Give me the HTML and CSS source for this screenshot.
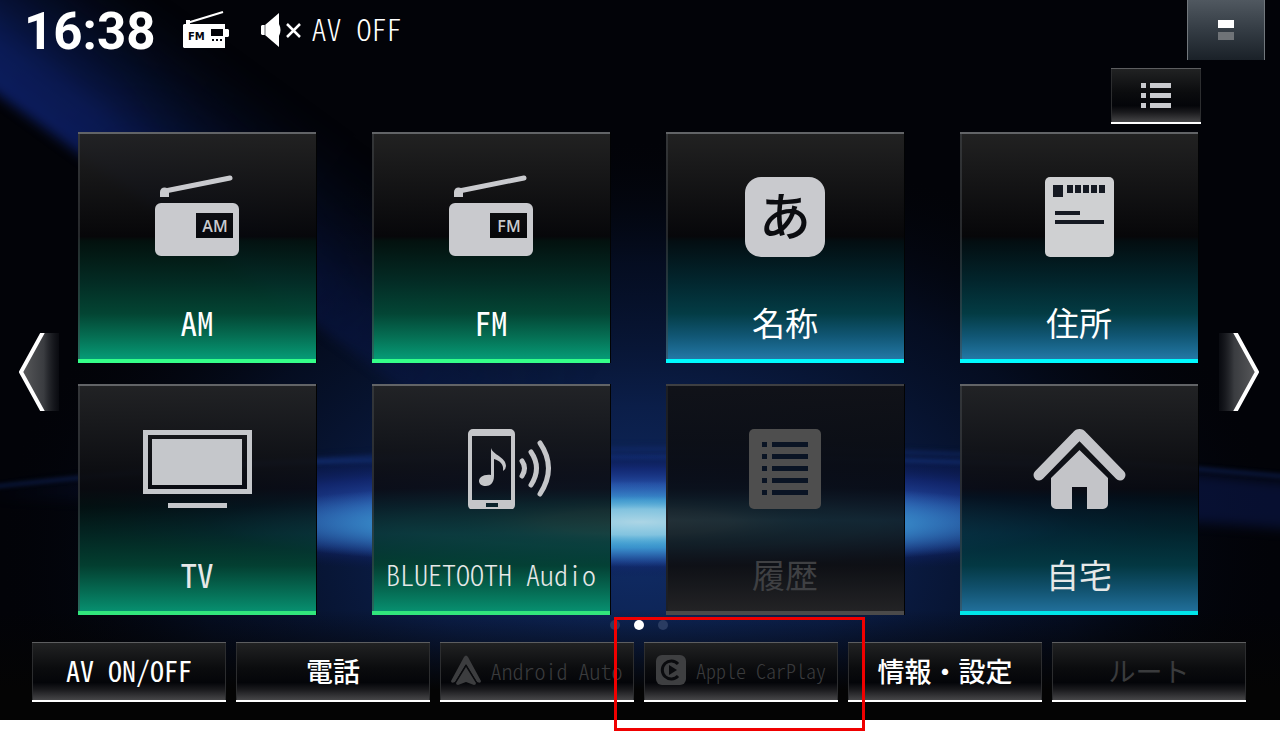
FILE: index.html
```html
<!DOCTYPE html>
<html lang="ja">
<head>
<meta charset="utf-8">
<meta name="viewport" content="width=device-width, initial-scale=1">
<title>AV OFF</title>
<link rel="stylesheet" href="styles.css">
</head>
<body>
<main class="screen">
  <svg class="backdrop" viewBox="0 0 1280 720" preserveAspectRatio="none" aria-hidden="true">
    <defs>
      <radialGradient id="navy"><stop offset="0" stop-color="#102c66"/><stop offset=".35" stop-color="#0c2150" stop-opacity=".9"/><stop offset=".7" stop-color="#071535" stop-opacity=".55"/><stop offset="1" stop-color="#03050c" stop-opacity="0"/></radialGradient>
      <radialGradient id="band"><stop offset="0" stop-color="#3a6ac8"/><stop offset=".5" stop-color="#2650a8" stop-opacity=".9"/><stop offset=".75" stop-color="#172f86" stop-opacity=".55"/><stop offset="1" stop-color="#0a1750" stop-opacity="0"/></radialGradient>
      <radialGradient id="cyan"><stop offset="0" stop-color="#43b4dc"/><stop offset=".55" stop-color="#3a92cc"/><stop offset="1" stop-color="#2f6fbd" stop-opacity="0"/></radialGradient>
      <radialGradient id="core"><stop offset="0" stop-color="#acd5e5"/><stop offset=".5" stop-color="#93cbe2" stop-opacity=".8"/><stop offset="1" stop-color="#4aa8d4" stop-opacity="0"/></radialGradient>
      <linearGradient id="ray" x1="0" y1="1" x2="0" y2="0"><stop offset="0" stop-color="#0d1f66"/><stop offset=".25" stop-color="#0b1c5a"/><stop offset=".6" stop-color="#061236" stop-opacity=".7"/><stop offset="1" stop-color="#030a20" stop-opacity="0"/></linearGradient>
      <linearGradient id="raylen"><stop offset="0" stop-color="#fff"/><stop offset=".3" stop-color="#ddd"/><stop offset=".6" stop-color="#777"/><stop offset="1" stop-color="#000"/></linearGradient>
      <linearGradient id="sea"><stop offset="0" stop-color="#0d2060" stop-opacity="0"/><stop offset=".25" stop-color="#0d2060"/><stop offset="1" stop-color="#0d1c58"/></linearGradient>
      <linearGradient id="floor" x1="0" y1="0" x2="0" y2="1"><stop offset="0" stop-color="#040404" stop-opacity="0"/><stop offset="1" stop-color="#040404"/></linearGradient>
      <mask id="fade" maskUnits="userSpaceOnUse" x="-150" y="-220" width="800" height="280"><rect x="-150" y="-220" width="800" height="280" fill="url(#raylen)"/></mask>
      <filter id="soft" x="-20%" y="-20%" width="140%" height="140%" color-interpolation-filters="sRGB"><feGaussianBlur stdDeviation="6"/></filter>
      <filter id="thin" x="-5%" y="-50%" width="110%" height="200%" color-interpolation-filters="sRGB"><feGaussianBlur stdDeviation="2"/></filter>
    </defs>
    <rect width="1280" height="720" fill="#020308"/>
    <ellipse cx="640" cy="550" rx="640" ry="410" fill="url(#navy)"/>
    <g transform="translate(0 96) rotate(36)" mask="url(#fade)">
      <rect x="-120" y="-170" width="770" height="170" fill="url(#ray)" filter="url(#soft)"/>
    </g>
    <path d="M-20 490Q300 454 640 452T1300 484V530Q900 500 640 500T-20 500Z" fill="url(#sea)" opacity=".5" filter="url(#soft)"/>
    <path d="M-20 488Q300 452 640 449T1300 478" fill="none" stroke="#153078" stroke-width="3" opacity=".6" filter="url(#thin)"/>
    <path d="M200 466Q640 448 1080 466" fill="none" stroke="#1c429a" stroke-width="2" opacity=".8" filter="url(#thin)"/>
    <ellipse cx="640" cy="515" rx="560" ry="62" fill="url(#band)"/>
    <ellipse cx="640" cy="524" rx="430" ry="43" fill="url(#cyan)"/>
    <ellipse cx="640" cy="522" rx="190" ry="26" fill="url(#core)"/>
    <rect y="610" width="1280" height="80" fill="url(#floor)"/>
    <rect y="690" width="1280" height="30" fill="#040404"/>
  </svg>

  <header class="status">
    <time class="clock" datetime="16:38">16:38</time>
    <svg class="status-radio" width="46" height="38" viewBox="0 0 46 38" fill="#fff" role="img" aria-label="FM ラジオ">
      <path d="M4 12 40 1" stroke="#fff" stroke-width="2"/><path d="M3 9h4v5H3zM42 18h3l1 1v6l-1 1h-3z"/>
      <path fill-rule="evenodd" d="M1 13h41v24H1l-1-1V14zM28 18v7h12v-7z"/>
      <text class="mini-text" x="5" y="29">FM</text>
      <path d="M29 28h2v2h-2zM33 28h2v2h-2zM37 28h2v2h-2z" fill="#05070f"/>
    </svg>
    <div class="source">
      <svg width="40" height="34" viewBox="0 0 40 34" aria-hidden="true"><path d="M0 13l1-1h3L18 0v11q3 6 0 12v11L4 22H1l-1-1z" fill="#fff"/><path d="M4 12v10" stroke="#05070f" stroke-opacity=".6"/><path d="M26 11l13 13M39 11 26 24" stroke="#fff" stroke-width="2.5"/></svg>
      <span class="source-name">AV OFF</span>
    </div>
    <button class="split" type="button" aria-label="画面切替"><span class="split-on"></span><span class="split-off"></span></button>
  </header>

  <div class="tools">
    <button class="list-button" type="button" aria-label="リスト">
      <svg width="31" height="27" viewBox="0 0 31 27" fill="#c9cace"><path d="M0 1h5v5H0zM9 1h21v5H9zM0 11h5v5H0zM9 11h21v5H9zM0 21h5v5H0zM9 21h21v5H9z"/></svg>
    </button>
  </div>

  <div class="pager">
    <button class="arrow" type="button" aria-label="前へ">
      <svg width="40" height="78" viewBox="0 0 40 78"><defs><linearGradient id="al"><stop offset="0" stop-color="#595a5c"/><stop offset=".6" stop-color="#3a3c40"/><stop offset="1" stop-color="#15171d" stop-opacity=".4"/></linearGradient></defs><path d="M24 0h16v78H24L2 39z" fill="url(#al)"/><path d="M24-1 2 39l22 40" fill="none" stroke="#fff" stroke-width="4"/></svg>
    </button>
    <div class="grid">
      <button class="tile av" type="button">
        <svg class="icon" width="84" height="82" viewBox="0 0 84 82" aria-hidden="true"><path d="M10 16 75 3" stroke="#c9cace" stroke-width="5" stroke-linecap="round"/><path d="M5 22v-5a4 4 0 0 1 9 0v5z" fill="#c9cace"/><path fill-rule="evenodd" d="M6 28h72a6 6 0 0 1 6 6v41a6 6 0 0 1-6 6H6a6 6 0 0 1-6-6V34a6 6 0 0 1 6-6zM41 38v25h37V38z" fill="#c9cace"/><text class="band-text" x="60" y="57">AM</text></svg>
        <span class="label">AM</span>
      </button>
      <button class="tile av" type="button">
        <svg class="icon" width="84" height="82" viewBox="0 0 84 82" aria-hidden="true"><path d="M10 16 75 3" stroke="#c9cace" stroke-width="5" stroke-linecap="round"/><path d="M5 22v-5a4 4 0 0 1 9 0v5z" fill="#c9cace"/><path fill-rule="evenodd" d="M6 28h72a6 6 0 0 1 6 6v41a6 6 0 0 1-6 6H6a6 6 0 0 1-6-6V34a6 6 0 0 1 6-6zM41 38v25h37V38z" fill="#c9cace"/><text class="band-text" x="60" y="57">FM</text></svg>
        <span class="label">FM</span>
      </button>
      <button class="tile navi" type="button">
        <svg class="icon" width="80" height="82" viewBox="0 0 80 82" aria-hidden="true"><rect y="2" width="80" height="80" rx="16" fill="#c9cace"/><text class="kana-text" x="40" y="61">あ</text></svg>
        <span class="label">名称</span>
      </button>
      <button class="tile navi" type="button">
        <svg class="icon" width="69" height="82" viewBox="0 0 69 82" aria-hidden="true"><rect y="2" width="69" height="80" rx="5" fill="#cfd0d2"/><path d="M8 10h10v12H8zM22 10h6v8h-6zM30 10h6v8h-6zM38 10h6v8h-6zM46 10h6v8h-6zM54 10h6v8h-6zM10 36h25v4H10zM10 45h49v4H10z" fill="#151922"/></svg>
        <span class="label">住所</span>
      </button>
      <button class="tile av low" type="button">
        <svg class="icon" width="109" height="82" viewBox="0 0 109 82" fill="#c5c7cb" aria-hidden="true"><path fill-rule="evenodd" d="M0 3h109v64H0zM5 8v54h99V8z"/><path d="M9 12h90v46H9zM25 76h59v5H25z"/></svg>
        <span class="label">TV</span>
      </button>
      <button class="tile av low" type="button">
        <svg class="icon" width="122" height="82" viewBox="0 0 122 82" fill="#c5c6c9" aria-hidden="true"><path fill-rule="evenodd" d="M43 2h37a5 5 0 0 1 5 5v71a5 5 0 0 1-5 5H43a5 5 0 0 1-5-5V7a5 5 0 0 1 5-5zM42 9v64h39V9zM56 76v4h12v-4z"/><path d="M61 21c2 7 15 9 15 18q0 3-3 5c1-7-3-10-9-12v17c0 7-4 10-8 10s-7-2-7-5 4-7 12-6z"/><path d="M92 34q5 7 0 15M101 25q11 16 0 33M110 16q17 25 0 51" fill="none" stroke="#c5c6c9" stroke-width="5" stroke-linecap="round"/></svg>
        <span class="label long">BLUETOOTH Audio</span>
      </button>
      <button class="tile off" type="button" disabled>
        <svg class="icon" width="72" height="82" viewBox="0 0 72 82" aria-hidden="true"><rect y="2" width="72" height="80" rx="5" fill="#4e4e4e"/><path d="M13 15h5v5h-5zM23 15h36v5H23zM13 27h5v5h-5zM23 27h36v5H23zM13 39h5v5h-5zM23 39h36v5H23zM13 51h5v5h-5zM23 51h36v5H23zM13 63h5v5h-5zM23 63h36v5H23z" fill="#0a1424"/></svg>
        <span class="label">履歴</span>
      </button>
      <button class="tile navi low" type="button">
        <svg class="icon" width="93" height="82" viewBox="0 0 93 82" fill="#c3c4c8" aria-hidden="true"><path d="M6 48 44 9Q46.500 6 49 9L87 48" fill="none" stroke="#c3c4c8" stroke-width="11" stroke-linecap="round" stroke-linejoin="round"/><path d="M46.500 23 75 51v26a5 5 0 0 1-5 5H54V60H39v22H23a5 5 0 0 1-5-5V51z"/></svg>
        <span class="label">自宅</span>
      </button>
    </div>
    <button class="arrow" type="button" aria-label="次へ">
      <svg width="40" height="78" viewBox="0 0 40 78"><defs><linearGradient id="ar"><stop offset="0" stop-color="#15171d" stop-opacity=".4"/><stop offset=".4" stop-color="#3a3c40"/><stop offset="1" stop-color="#595a5c"/></linearGradient></defs><path d="M16 0H0v78h16l22-39z" fill="url(#ar)"/><path d="M16-1 38 39 16 79" fill="none" stroke="#fff" stroke-width="4"/></svg>
    </button>
  </div>

  <div class="dots" role="img" aria-label="2 / 3"><span class="dot"></span><span class="dot current"></span><span class="dot"></span></div>

  <nav class="bar">
    <button class="key latin" type="button">AV ON/OFF</button>
    <button class="key" type="button">電話</button>
    <button class="key android" type="button" disabled>
      <svg width="30" height="30" viewBox="0 0 30 30" fill="#3c3d3f" aria-hidden="true"><path d="M13 2q2-3 4 0l13 24q0 3-4 1L15 9 4 27q-4 2-4-1z"/><path d="M15 12l10 16q0 2-2 2l-8-3-8 3q-2 0-2-2z"/><path d="M15 10 4 28M15 10l11 18" stroke="#0a0b0e" stroke-width="1"/></svg>
      <span>Android Auto</span>
    </button>
    <div class="marked">
      <button class="key carplay" type="button" disabled>
        <svg width="30" height="30" viewBox="0 0 30 30" aria-hidden="true"><rect width="30" height="30" rx="6" fill="#3e3f41"/><path d="M22 9a9 9 0 1 0 0 12" fill="none" stroke="#0a0b0e" stroke-width="3"/><path d="M13 10l8 5-8 5z" fill="#0a0b0e"/></svg>
        <span>Apple CarPlay</span>
      </button>
      <span class="marker"></span>
    </div>
    <button class="key" type="button">情報・設定</button>
    <button class="key" type="button" disabled>ルート</button>
  </nav>
</main>
</body>
</html>
```
FILE: styles.css
```css
* { box-sizing: border-box; }

body {
  margin: 0;
  padding-bottom: 15px;
  background: #fff;
  font-family: "Noto Sans CJK JP", "Noto Sans", sans-serif;
  font-feature-settings: "hwid";
  color: #fff;
}

button {
  margin: 0;
  padding: 0;
  border: 0;
  background: none;
  font: inherit;
  font-feature-settings: inherit;
  color: inherit;
}

svg { display: block; flex: none; }

.screen {
  position: relative;
  isolation: isolate;
  display: flex;
  flex-direction: column;
  padding-bottom: 18px;
}

.backdrop {
  position: absolute;
  inset: 0;
  z-index: -1;
  width: 100%;
  height: 100%;
}

.status {
  display: flex;
  align-items: center;
  height: 60px;
  padding: 0 15px 0 24px;
}

.clock {
  font: 700 51px/60px Roboto, sans-serif;
  font-feature-settings: normal;
  padding-top: 4px;
}

.status-radio { margin-left: 28px; }

.source {
  display: flex;
  align-items: center;
  gap: 10px;
  margin-left: 32px;
}

.source-name {
  padding-bottom: 4px;
  font-size: 30px;
  line-height: 40px;
  font-weight: 300;
  white-space: pre;
}

.split {
  display: flex;
  flex-direction: column;
  align-items: center;
  gap: 4px;
  width: 78px;
  height: 60px;
  margin-left: auto;
  padding-top: 20px;
  border: solid #72787d;
  border-width: 0 1px;
  background: linear-gradient(#505860, #343c44 50%, #1a2128);
}

.split-on, .split-off { width: 16px; height: 8px; }
.split-on { background: #fff; }
.split-off { background: #6f7377; }

.tools {
  display: flex;
  justify-content: flex-end;
  padding: 8px 79px 8px 0;
}

.list-button, .key {
  border: 0 solid #fff;
  border-bottom-width: 2px;
  background: linear-gradient(#222324, #0b0c0e 45%, #040509 70%, #1a1a1d 82%, #464648);
  box-shadow: inset 0 1px #5d5e60, inset 1px 0 #2c2d2f, inset -1px 0 #2c2d2f;
}

.list-button {
  display: flex;
  align-items: center;
  justify-content: center;
  width: 90px;
  height: 56px;
}

.pager {
  display: flex;
  align-items: center;
  gap: 19px;
  padding: 0 21px 0 19px;
}

.arrow { flex: none; margin-bottom: 4px; }

.grid {
  flex: 1;
  display: grid;
  grid-template-columns: repeat(4, 1fr);
  gap: 21px 56px;
  padding-right: 2px;
}

.tile {
  display: flex;
  flex-direction: column;
  align-items: center;
  min-width: 0;
  padding: 43px 0 17px;
  border: 0 solid;
  border-bottom-width: 4px;
  box-shadow: inset 0 2px #626467, inset 2px 0 rgba(70, 74, 78, .5), 1px 0 #020304;
}

.av {
  border-bottom-color: #35ff89;
  background: linear-gradient(rgba(35, 35, 35, .96), rgba(7, 7, 9, .92) 46%, rgba(3, 18, 14, .92) 48%, rgba(3, 46, 37, .93) 66%, rgba(3, 72, 53, .95) 80%, rgba(5, 112, 84, .98) 90%, #069b76);
}

.navi {
  border-bottom-color: #00fbff;
  background: linear-gradient(rgba(35, 35, 35, .96), rgba(7, 7, 9, .92) 46%, rgba(3, 14, 17, .92) 48%, rgba(2, 40, 47, .93) 66%, rgba(3, 62, 70, .95) 80%, rgba(17, 88, 118, .98) 90%, #2378a6);
}

.av.low { border-bottom-color: #31e67c; color: #e6e8e8; background: linear-gradient(rgba(35, 36, 38, .96), rgba(9, 10, 14, .9) 46%, rgba(3, 18, 18, .86) 54%, rgba(3, 42, 37, .85) 66%, rgba(3, 66, 50, .94) 80%, rgba(5, 104, 80, .98) 90%, #078f6f); }
.navi.low { border-bottom-color: #00e5e9; color: #e6e8e8; background: linear-gradient(rgba(35, 36, 38, .96), rgba(9, 10, 14, .9) 46%, rgba(3, 14, 20, .88) 50%, rgba(2, 40, 50, .88) 66%, rgba(3, 58, 68, .95) 80%, rgba(17, 82, 110, .98) 90%, #216f9a); }

.off {
  border-bottom-color: #4b4a4a;
  color: #3f4043;
  background: linear-gradient(rgba(17, 18, 23, .95), rgba(8, 11, 17, .93) 46%, rgba(12, 20, 25, .85) 60%, rgba(14, 15, 18, .95) 80%, #232325);
  box-shadow: inset 0 2px #3e3f42, inset 2px 0 #1d1f24, 1px 0 #020304;
}

.label {
  margin-top: 45px;
  font-size: 33px;
  line-height: 40px;
  font-weight: 400;
  white-space: nowrap;
}

.label.long { font-size: 28px; font-weight: 300; }

.band-text {
  font: 600 16px "Open Sans", sans-serif;
  fill: #c9cace;
  text-anchor: middle;
}

.mini-text {
  font: 700 10px "DejaVu Sans", sans-serif;
  fill: #05070f;
}

.kana-text {
  font: 500 52px "Noto Sans CJK JP", sans-serif;
  fill: #0b0c10;
  text-anchor: middle;
}

.dots {
  display: flex;
  justify-content: center;
  gap: 14px;
  padding: 5px 2px 12px 0;
}

.dot {
  width: 10px;
  height: 10px;
  border-radius: 50%;
  background: #2a3c62;
}

.dot.current { background: #fff; }

.bar {
  display: grid;
  grid-template-columns: repeat(6, 1fr);
  gap: 10px;
  padding: 0 34px 0 32px;
}

.key {
  display: flex;
  align-items: center;
  justify-content: center;
  height: 60px;
  min-width: 0;
  padding-bottom: 2px;
  font-size: 27px;
  font-weight: 500;
  white-space: pre;
}

.key:disabled { color: #3a3b3d; font-weight: 400; }
.key.latin { font-size: 28px; font-weight: 400; }
.key.android { gap: 9px; font-size: 22px; font-weight: 300; }
.key.carplay { width: 100%; gap: 10px; font-size: 20px; font-weight: 300; }

.marked { position: relative; }

.marker {
  position: absolute;
  inset: -25px -27px -29px -30px;
  border: 3px solid #f00000;
  pointer-events: none;
}
```
